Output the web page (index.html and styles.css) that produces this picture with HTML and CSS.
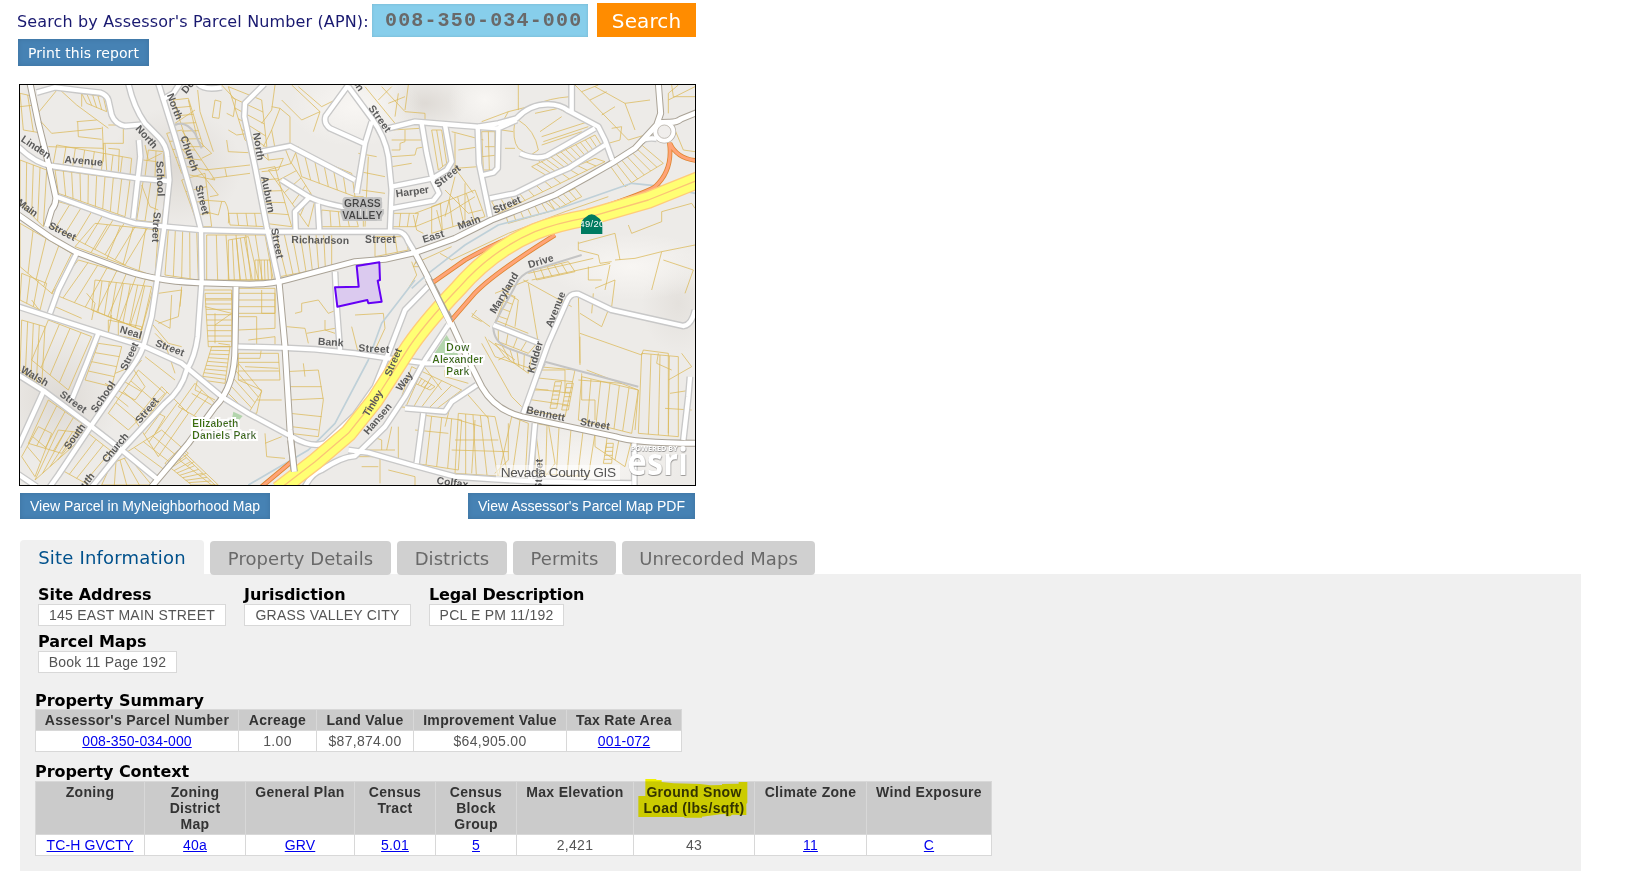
FILE: index.html
```html
<!DOCTYPE html>
<html lang="en">
<head>
<meta charset="utf-8">
<title>Parcel Report</title>
<link rel="stylesheet" href="styles.css">
</head>
<body>
<form class="search">
  <label class="search-label" for="apn">Search by Assessor's Parcel Number (APN):</label>
  <input class="search-input" id="apn" value="008-350-034-000">
  <button class="search-button" type="button">Search</button>
</form>
<button class="button print" type="button">Print this report</button>

<svg class="map" viewBox="15 15 2025 1200" aria-label="Parcel map">
  <defs>
    <radialGradient id="shade"><stop offset="0" stop-color="#dedad5"/><stop offset="1" stop-color="#dedad5" stop-opacity="0"/></radialGradient>
    <radialGradient id="light"><stop offset="0" stop-color="#f8f6f3"/><stop offset="1" stop-color="#f8f6f3" stop-opacity="0"/></radialGradient>
    <filter id="halo" x="-10%" y="-20%" width="120%" height="140%">
      <feMorphology in="SourceAlpha" operator="dilate" radius="5" result="wide"/>
      <feGaussianBlur in="wide" stdDeviation="1.5" result="soft"/>
      <feFlood flood-color="#fff"/><feComposite in2="soft" operator="in" result="glow"/>
      <feMerge><feMergeNode in="glow"/><feMergeNode in="SourceGraphic"/></feMerge>
    </filter>
    <filter id="placeHalo" x="-20%" y="-20%" width="140%" height="140%">
      <feMorphology in="SourceAlpha" operator="dilate" radius="6" result="wide"/>
      <feGaussianBlur in="wide" stdDeviation="2" result="soft"/>
      <feFlood flood-color="#c2c2c2"/><feComposite in2="soft" operator="in" result="glow"/>
      <feMerge><feMergeNode in="glow"/><feMergeNode in="SourceGraphic"/></feMerge>
    </filter>
    <g id="minor">
      <path d="M65 38L120 22L200 32L255 38Q275 45 280 60L290 105Q300 132 330 138L380 134"/>
      <path d="M340 10Q355 80 390 130L430 170Q455 195 457 230L463 300L448 440L425 610L410 710L385 800Q370 840 330 890L230 1035L150 1155L130 1185L105 1220"/>
      <path d="M430 10L480 170L540 380L558 450L560 600L548 770Q540 830 515 870Q500 930 450 970L320 1110L230 1222"/>
      <path d="M440 60L475 40L495 10M550 12Q570 32 620 22"/>
      <path d="M125 350L290 410L360 430L450 440L560 450L760 455L1150 455Q1170 458 1180 485L1200 518"/>
      <path d="M10 200Q60 250 110 258L370 295L460 303M372 180L376 230L368 300L355 415"/>
      <path d="M748 12L690 70L688 110L720 260L755 440L790 600M725 218L825 198L1020 300"/>
      <path d="M800 300L880 350Q920 372 1035 390M880 355L840 395L842 450M908 370L913 450"/>
      <path d="M1000 15L932 108Q925 130 945 145L1052 193M1000 20L1070 115Q1110 170 1120 230L1130 330L1125 450M1070 125L1050 190L1025 340"/>
      <path d="M185 520L130 630L105 700M960 575L965 680L975 810"/>
      <path d="M1120 145L1200 125L1320 135L1450 145L1505 120M1390 140L1450 130L1505 115Q1545 72 1600 73Q1635 73 1660 92L1750 140L1770 180L1792 240M1670 12L1670 95"/>
      <path d="M1515 220Q1560 240 1595 228L1740 145M1425 355L1500 340L1590 295L1660 265L1770 195M1388 140L1392 250L1425 410M1450 150L1448 265L1435 278L1405 285"/>
      <path d="M1220 130L1235 220L1253 300L1272 340L1255 362L1130 385M1290 135L1310 245L1295 270L1253 295L1130 320"/>
      <path d="M10 680L260 760L390 800L500 850L620 950L700 1000L830 1070Q890 1105 930 1090L1020 1005L1080 920L1120 820L1170 690L1240 618M250 760L215 850L170 960"/>
      <path d="M10 885L90 935L230 1040L320 1110L430 1200M85 935L10 1100M10 1183L65 1220"/>
      <path d="M670 800L800 803L900 808L1020 820L1120 835L1235 850L1290 850"/>
      <path d="M1300 735L1230 840L1170 950L1110 1040L1020 1128Q980 1130 920 1170Q890 1180 870 1220M1000 1110L1060 1118L1190 1155L1320 1190L1440 1198L1570 1205L1850 1210"/>
      <path d="M1170 985L1290 995L1310 965L1385 915M1225 1000L1205 1150M1560 1030L1545 1200M1525 1000L1600 790L1655 665Q1665 638 1690 642L1790 690L2005 738Q2030 735 2040 690M1435 735L1570 788M2025 890L2020 950L2005 1080M1858 1090L1858 1215"/>
      <path d="M1880 185Q1890 172 1925 176"/>
    </g>
    <g id="major">
      <path d="M10 405L110 475L180 515L300 560Q410 604 550 608L680 612Q760 615 820 598L1020 545L1110 538L1200 518L1320 475L1430 420L1520 385L1620 345L1720 290L1790 250L1860 205L1925 135L1937 100L1930 10"/>
      <path d="M45 10L70 130L100 250L122 350Q125 370 110 390L95 440"/>
      <path d="M1200 518L1300 710L1360 840L1400 920Q1440 990 1520 1010L1800 1070Q1860 1090 2045 1090"/>
      <path d="M792 605L810 800L825 1050L838 1180M663 620L660 800Q660 920 600 980L520 1090L410 1220M1925 128L1960 127Q1985 128 1998 117L2045 98"/>
    </g>
    <path id="highway" d="M2050 300L1900 360L1720 412Q1620 430 1560 455Q1430 510 1330 625Q1220 740 1170 820L1080 960L1000 1060L900 1145L790 1230"/>
    <clipPath id="shieldClip"><path d="M1698 405H1762V462H1698Z"/></clipPath>
  </defs>
  <rect class="land" x="15" y="15" width="2025" height="1200"/>
  <ellipse cx="480" cy="260" rx="200" ry="180" fill="url(#shade)"/>
  <ellipse cx="130" cy="960" rx="180" ry="200" fill="url(#shade)"/>
  <ellipse cx="1230" cy="70" rx="130" ry="80" fill="url(#shade)"/>
  <ellipse cx="1410" cy="60" rx="110" ry="90" fill="url(#light)"/>
  <ellipse cx="1700" cy="1160" rx="300" ry="120" fill="url(#light)"/>
  <ellipse cx="1990" cy="670" rx="110" ry="150" fill="url(#shade)" opacity=".6"/>
  <ellipse cx="1020" cy="80" rx="200" ry="120" fill="url(#light)"/>
  <ellipse cx="1850" cy="560" rx="260" ry="100" fill="url(#light)"/>
  <path class="park" d="M1295 765L1255 825L1330 825ZM655 995L683 1008L665 1028L648 1050L628 1045L650 1020Z"/>
  <path class="parcel-line" id="parcels" d="M15 80L60 75M60 110L130 25L185 75L280 145M185 125L245 120M200 35V80M188 125L190 170L260 178M262 140L265 210M100 200L265 205M280 135H325V190H265V245M270 190L275 270M280 205L313 208L310 275M60 105L110 160L260 145M390 195L400 240L440 220M385 240L425 245M380 315L405 380L430 390M600 60L618 65L612 115L592 112ZM520 60L548 180L590 220L560 235M548 30L555 95L595 215M500 205L610 345L585 350M480 130L540 90M620 15L662 60L655 110L635 100M640 150L665 165L700 160M635 180L640 215L700 218M570 270L705 255M590 295L705 280M630 265L635 290M560 360L630 365Q645 390 640 430M570 395L610 405L620 365M780 15L770 90L740 130M770 80L795 85L770 150L780 205M795 85L825 110L825 190L810 205L828 250L850 200M800 60L860 120L915 95M830 15L915 95L895 155M770 150L745 200M850 20L920 80L960 60M760 240L805 235L790 270L740 275M1020 350H1045V440M1030 220L1085 230M1035 275L1110 290M1040 330L1110 340M1060 230L1050 440M1130 150L1215 145M1130 180L1225 180M1130 230L1200 225L1205 205L1230 200M1130 260L1190 250M1170 150V185L1155 190V210H1130M1310 155L1405 180M1320 160V265L1375 340M1330 210L1395 200M1320 265L1390 260M1200 400L1280 370M1195 405L1205 450L1225 460M1200 440L1300 400L1380 350M1265 390L1280 450M1290 330L1360 400L1400 390M1320 290L1290 410M1350 310V420M1400 230L1450 225M1410 200H1450M1460 150L1495 155M1470 205H1500M1500 120Q1490 180 1510 205L1575 245M1510 120Q1560 150 1570 210L1540 230M1560 100L1630 85L1700 120M1575 155L1640 110M1580 170L1720 125M1585 185L1720 140M1580 195L1700 155M1510 15V90M1665 50Q1600 55 1560 75L1480 95L1400 125M1480 95L1460 130M1100 20L1170 95L1230 100L1230 120M1120 70L1170 50M1090 60L1130 20M1150 40L1140 110M1180 15L1170 90M1050 20L1140 130M1680 15L1840 180L1890 165M1700 35L1750 15M1725 60L1775 35M1760 105L1800 80M1830 70L1905 60M1740 20L1830 70L1860 150M1790 145L1820 140L1815 180L1780 190M1990 15L1960 40V100M1960 60L2040 20M1970 15L1975 50H2040M1980 150L2005 210L2040 215M1275 520L1310 540L1480 460L1650 395L1780 350M1200 550L1310 500M1690 490L1800 460L1815 540M1840 435L1850 460L1940 425V395L2030 370L2040 385M1690 485L1690 510L1750 525L1755 550L1790 545M1540 580L1735 535M1550 600L1785 550M1800 540L1860 535L1940 515L2040 495M1940 515L1910 630M1785 555L1770 630M1945 540L2035 570L2010 640M1720 560V600H1760M1210 530L1195 560L1230 560M1190 545L1205 585L1180 625M840 700L860 695V670L910 660L940 700L965 690M815 740L870 745L880 790M930 720V750L960 760M875 760L960 745M670 835H735L740 800M690 860L790 865M670 900L740 930L725 1000L710 1000M725 960L800 960M810 875L910 870L925 960L910 1070L825 1060M815 920L920 920M820 960L925 955M825 1000L920 1010M830 1040L910 1050M865 850L870 890M750 1060L755 1130L810 1135M750 1090L800 1070M550 890L540 930L600 960M530 940L590 975M430 640L500 630L490 710L430 730M470 645L465 745L420 720M410 730L460 790L500 800M500 620L495 680M565 630H650V660H570M570 680L650 700L600 735M600 700V790M610 790L645 795M670 625H780V745L670 750M670 710H725V795M740 630V700H780M700 780L780 770V800M420 760L450 790L480 880M280 720L380 740L375 780L280 760ZM290 705L280 760M310 720V765M50 660L80 700M215 640L240 670L230 720M120 680L200 715M270 910L360 960L390 920L350 860L300 880M290 940L340 980M320 900L380 935M380 840L330 900M390 830L480 900M410 990L450 1010L420 1060M1020 705L1105 700L1110 745L1080 810M1010 740L1030 820M1370 700L1425 740M1385 690L1370 710L1400 725M1420 780L1500 840M1440 640L1540 600M1525 600L1670 680M1440 720L1540 760M1475 640L1510 660L1500 740M1540 610L1570 790M1400 790L1490 950L1520 980M1410 770L1440 830L1560 870M1450 840L1470 830M1695 700L1760 740L1780 690M1695 760L1880 825L1885 810L1960 820V1060M1690 640L1695 855M1735 640L1730 700M1740 625L1800 600L1790 680M1695 770V850M1715 870L1870 930L1860 1050M1690 900L1820 910M1930 820L1925 850L1970 870M1960 900L2030 860L2000 820M1965 940L2030 930M1950 985L2030 990M1700 880V960H1740V1020M1580 850L1550 930H1600M1580 870L1650 870V940M1560 1040L1580 1190M1600 1030L1620 1150L1590 1190M1480 1030V1140L1440 1180M1380 1020L1370 1180M1320 1080L1450 1080M1310 1110L1480 1115M1330 1020L1400 1040M1130 1040L1115 1110M1150 1040V1140M1100 1110H1140M1060 1080Q1080 1070 1100 1080V1110H1050M1020 1130H1095V1210M1040 1160H1090M1200 1050L1300 1060M1120 1170L1200 1190V1215M1310 960L1290 1040M1355 940L1420 1015M1290 870V890L1360 910M1220 850L1280 930"/>
  <path class="creek" d="M1190 625L1240 580L1350 495L1450 435L1620 390L1850 310L1950 320L2040 340M1200 600L1100 730L1060 840L960 1030L880 1110L700 1215"/>
  <path class="lane" d="M480 135Q510 120 540 160L560 205M1700 525L1570 565Q1530 575 1510 600Q1490 640 1460 690L1435 740Q1435 785 1480 805L1590 845L1870 920M1535 955L1590 850"/>
  <use href="#minor" class="minor-case"/><use href="#major" class="major-case"/>
  <circle class="circle-case" cx="1948" cy="155" r="27"/>
  <use href="#minor" class="minor-fill"/><use href="#major" class="major-fill"/>
  <circle class="circle-fill" cx="1948" cy="155" r="27"/><circle class="circle-core" cx="1948" cy="155" r="20"/>
  <path class="ramp-case" d="M1963 188Q1975 270 1920 320Q1900 335 1740 390L1620 430Q1500 455 1350 540L1250 610M1965 190Q1985 235 2045 242M1620 465Q1420 590 1370 650L1305 725M830 1145L740 1220"/>
  <path class="ramp" d="M1963 188Q1975 270 1920 320Q1900 335 1740 390L1620 430Q1500 455 1350 540L1250 610M1965 190Q1985 235 2045 242M1620 465Q1420 590 1370 650L1305 725M830 1145L740 1220"/>
  <use href="#highway" class="highway-case"/><use href="#highway" class="highway-fill"/><use href="#highway" class="highway-mid"/>
  <path class="major-case" d="M1240 598L1305 725M827 1080L838 1175"/><path class="major-fill" d="M1235 588L1310 740M826 1070L838 1175"/>
  <path class="selected" d="M960 622L1031 620L1025 558L1093 547L1095 600L1088 602L1100 665L1060 670L1057 660L967 680Z"/>

  <g class="street-name">
    <text transform="translate(16 182) rotate(34)" textLength="100">Linden</text>
    <text transform="translate(148 248) rotate(5)" textLength="115">Avenue</text>
    <text transform="translate(360 147) rotate(48)" textLength="82">North</text>
    <text transform="translate(424 243) rotate(88)" textLength="106">School</text>
    <text transform="translate(416 395) rotate(93)" textLength="92">Street</text>
    <text transform="translate(455 45) rotate(69)" textLength="82">North</text>
    <text transform="translate(496 172) rotate(71)" textLength="110">Church</text>
    <text transform="translate(541 318) rotate(76)" textLength="91">Street</text>
    <text transform="translate(714 160) rotate(81)" textLength="84">North</text>
    <text transform="translate(738 290) rotate(79)" textLength="112">Auburn</text>
    <text transform="translate(768 447) rotate(79)" textLength="91">Street</text>
    <text transform="translate(4 372) rotate(36)" textLength="68">Main</text>
    <text transform="translate(98 443) rotate(27)" textLength="88">Street</text>
    <text transform="translate(829 489) rotate(1)" textLength="173">Richardson</text>
    <text transform="translate(513 43) rotate(-50)">Do</text>
    <text transform="translate(1010 5) rotate(55)">on</text>
    <text transform="translate(1059 85) rotate(54)" textLength="92">Street</text>
    <text transform="translate(1144 352) rotate(-8)" textLength="100">Harper</text>
    <text transform="translate(1268 324) rotate(-38)" textLength="90">Street</text>
    <text transform="translate(1226 489) rotate(-17)" textLength="66">East</text>
    <text transform="translate(1332 449) rotate(-20)" textLength="71">Main</text>
    <text transform="translate(1439 401) rotate(-23)" textLength="88">Street</text>
    <text transform="translate(1050 488)" textLength="92">Street</text>
    <text transform="translate(1543 565) rotate(-17)" textLength="78">Drive</text>
    <text transform="translate(1441 703) rotate(-59)" textLength="137">Maryland</text>
    <text transform="translate(313 757) rotate(17)" textLength="67">Neal</text>
    <text transform="translate(419 797) rotate(21)" textLength="90">Street</text>
    <text transform="translate(334 873) rotate(-65)" textLength="88">Street</text>
    <text transform="translate(243 1000) rotate(-56)" textLength="106">School</text>
    <text transform="translate(15 875) rotate(30)" textLength="90">Walsh</text>
    <text transform="translate(132 947) rotate(36)" textLength="91">Street</text>
    <text transform="translate(162 1110) rotate(-54)" textLength="86">South</text>
    <text transform="translate(375 1032) rotate(-50)" textLength="90">Street</text>
    <text transform="translate(275 1150) rotate(-50)" textLength="105">Church</text>
    <text transform="translate(185 1254) rotate(-50)" textLength="86">South</text>
    <text transform="translate(908 794) rotate(4)" textLength="77">Bank</text>
    <text transform="translate(1030 814) rotate(3)" textLength="93">Street</text>
    <text transform="translate(1127 891) rotate(-67)" textLength="88">Street</text>
    <text transform="translate(1158 935) rotate(-54)" textLength="62">Way</text>
    <text transform="translate(1060 1012) rotate(-59)" textLength="86">Tinloy</text>
    <text transform="translate(1060 1066) rotate(-50)" textLength="112">Hansen</text>
    <text transform="translate(1610 744) rotate(-68)" textLength="112">Avenue</text>
    <text transform="translate(1557 881) rotate(-74)" textLength="98">Kidder</text>
    <text transform="translate(1532 999) rotate(12)" textLength="118">Bennett</text>
    <text transform="translate(1694 1034) rotate(10)" textLength="90">Street</text>
    <text transform="translate(1264 1211) rotate(8)" textLength="95">Colfax</text>
    <text transform="translate(1580 1229) rotate(-88)" textLength="92">Street</text>
  </g>
  <g class="place-name" filter="url(#placeHalo)"><text x="1042" y="381">GRASS</text><text x="1042" y="417">VALLEY</text></g>
  <g class="park-name" filter="url(#halo)">
    <text x="1294" y="813" textLength="69">Dow</text><text x="1252" y="848" textLength="152">Alexander</text><text x="1294" y="884" textLength="69">Park</text>
  </g>
  <g class="park-name" filter="url(#halo)">
    <text x="532" y="1040" textLength="138">Elizabeth</text><text x="532" y="1076" textLength="192">Daniels Park</text>
  </g>
  <path class="shield" d="M1698 462V436Q1700 418 1712 412Q1730 394 1748 412Q1760 418 1762 436V462Z"/>
  <text class="shield-text" x="1731" y="440" clip-path="url(#shieldClip)">49/20</text>
  <rect class="credit-box" x="1443" y="1155" width="372" height="45"/>
  <text class="credit" x="1457" y="1191" textLength="346">Nevada County GIS</text>
  <g class="esri"><text class="esri-small" x="1847" y="1114" textLength="141" lengthAdjust="spacingAndGlyphs">POWERED BY</text><text class="esri-big" x="1837" y="1184" textLength="182" lengthAdjust="spacingAndGlyphs">esri</text></g>
</svg>

<div class="map-buttons">
  <button class="button map-button" type="button">View Parcel in MyNeighborhood Map</button>
  <button class="button map-button" type="button">View Assessor's Parcel Map PDF</button>
</div>

<nav class="tabs">
  <a class="tab tab-active">Site Information</a><a class="tab tab-details">Property Details</a><a class="tab tab-districts">Districts</a><a class="tab tab-permits">Permits</a><a class="tab tab-maps">Unrecorded Maps</a>
</nav>
<main class="panel">
  <div class="fields">
    <section class="field"><h3 class="heading">Site Address</h3><div class="value value-address">145 EAST MAIN STREET</div></section>
    <section class="field"><h3 class="heading">Jurisdiction</h3><div class="value value-city">GRASS VALLEY CITY</div></section>
    <section class="field"><h3 class="heading heading-legal">Legal Description</h3><div class="value value-legal">PCL E PM 11/192</div></section>
  </div>
  <div class="fields">
    <section class="field"><h3 class="heading">Parcel Maps</h3><div class="value value-book">Book 11 Page 192</div></section>
  </div>
  <h3 class="heading summary-heading">Property Summary</h3>
  <table class="grid summary">
    <colgroup><col class="s1"><col class="s2"><col class="s3"><col class="s4"><col class="s5"></colgroup>
    <tr><th>Assessor's Parcel Number</th><th>Acreage</th><th>Land Value</th><th>Improvement Value</th><th>Tax Rate Area</th></tr>
    <tr><td><a href="#">008-350-034-000</a></td><td>1.00</td><td>$87,874.00</td><td>$64,905.00</td><td><a href="#">001-072</a></td></tr>
  </table>
  <h3 class="heading context-heading">Property Context</h3>
  <table class="grid context">
    <colgroup><col class="c1"><col class="c2"><col class="c3"><col class="c4"><col class="c5"><col class="c6"><col class="c7"><col class="c8"><col class="c9"></colgroup>
    <tr><th>Zoning</th><th>Zoning<br>District<br>Map</th><th>General Plan</th><th>Census<br>Tract</th><th>Census<br>Block<br>Group</th><th>Max Elevation</th>
      <th class="marked">Ground Snow<br>Load (lbs/sqft)<svg class="marker" viewBox="401 297 345 120"><path d="M435 297H468V300H484V306L520 310L600 312L630 316L665 315V312L715 311V306H741V368L738 372V405L695 404L690 409H676V402L660 403L605 410V413H552V411H414V348H435Z"/></svg></th>
      <th>Climate Zone</th><th>Wind Exposure</th></tr>
    <tr><td><a href="#">TC-H GVCTY</a></td><td><a href="#">40a</a></td><td><a href="#">GRV</a></td><td><a href="#">5.01</a></td><td><a href="#">5</a></td><td>2,421</td><td>43</td><td><a href="#">11</a></td><td><a href="#">C</a></td></tr>
  </table>
</main>
<script src="parcels.js"></script>
</body>
</html>
```
FILE: styles.css
```css
* { box-sizing: border-box; }
body { margin: 0; width: 1651px; height: 873px; overflow: hidden; background: #fff; font-family: "DejaVu Sans", sans-serif; }
button, input { border: 0; margin: 0; padding: 0; font-family: inherit; border-radius: 0; }
.search { display: flex; align-items: flex-start; height: 39px; padding: 3px 0 0 17px; margin: 0; }
.search-label { width: 355px; padding-top: 9px; font-size: 16px; line-height: 20px; letter-spacing: .14px; color: #191970; white-space: nowrap; }
.search-input { width: 216px; height: 33px; margin-top: 1px; padding-left: 13px; background: #87ceeb; color: #696969; font: bold 20px "Liberation Mono", monospace; letter-spacing: 1.15px; box-shadow: inset 0 0 3px rgba(0,0,0,.12); }
.search-button { width: 99px; height: 34px; margin-left: 9px; padding-top: 1px; background: #ff8c00; color: #fff; font-size: 20px; letter-spacing: .1px; }
.button { background: #4682b4; color: #fff; box-shadow: inset 0 0 5px rgba(0,0,0,.12); white-space: nowrap; }
.print { display: block; width: 131px; height: 27px; margin-left: 18px; font-size: 14px; letter-spacing: .1px; }
.map { display: block; width: 677px; height: 402px; margin: 18px 0 0 19px; border: 1px solid #000; background: #edebe8; }
.map-buttons { display: flex; justify-content: space-between; width: 675px; height: 26px; margin: 7px 0 21px 20px; }
.map-button { padding: 0 10px; font: 14px "Liberation Sans", sans-serif; }
.tabs { display: flex; align-items: flex-start; gap: 6px; height: 34px; margin-left: 20px; }
.tab { height: 34px; margin-top: 1px; border-radius: 4px; background: #d0d0d0; color: #696969; font-size: 18px; line-height: 36px; letter-spacing: .07px; text-align: center; white-space: nowrap; position: relative; }
.tab-active { width: 184px; height: 35px; margin-top: 0; background: #f0f0f0; color: #00518c; border-radius: 4px 4px 0 0; letter-spacing: .2px; }
.tab-details { width: 181px; } .tab-districts { width: 110px; } .tab-permits { width: 103px; } .tab-maps { width: 193px; }
.panel { width: 1561px; height: 297px; margin-left: 20px; padding: 12px 0 0 15px; background: #f0f0f0; }
.fields { display: flex; gap: 18px; height: 47px; margin-left: 3px; }
.field { white-space: nowrap; }
.heading { margin: 0; height: 18px; font-size: 16px; line-height: 18px; letter-spacing: -.06px; font-weight: bold; color: #000; white-space: nowrap; }
.heading-legal { letter-spacing: -.15px; }
.value { height: 22px; border: 1px solid #d8d8d8; background: #fff; color: #555; font: 14px/20px "Liberation Sans", sans-serif; letter-spacing: .22px; text-align: center; white-space: nowrap; }
.value-address { width: 188px; } .value-city { width: 167px; } .value-legal { width: 135px; } .value-book { width: 139px; }
.summary-heading { margin-top: 11px; line-height: 19px; }
.context-heading { margin-top: 11px; }
.grid { table-layout: fixed; border-collapse: collapse; font: 14px/16px "Liberation Sans", sans-serif; color: #555; }
.grid th, .grid td { padding: 2px 0; height: 21px; border: 1px solid #d8d8d8; text-align: center; vertical-align: top; white-space: nowrap; letter-spacing: .3px; }
.grid th { background: #cbcbcb; color: #333; letter-spacing: .31px; }
.grid td { background: #fff; }
.grid a { color: #00e; letter-spacing: .14px; }
.summary { width: 647px; } .context { width: 957px; }
.context th { height: 53px; }
.s1 { width: 203px; } .s2 { width: 78px; } .s3 { width: 97px; } .s4 { width: 153px; } .s5 { width: 115px; }
.c1 { width: 109px; } .c2 { width: 101px; } .c3 { width: 109px; } .c4 { width: 81px; } .c5 { width: 81px; } .c6 { width: 117px; } .c7 { width: 121px; } .c8 { width: 112px; } .c9 { width: 125px; }
.marked { position: relative; }
.marker { position: absolute; left: 0; top: -3px; width: 115px; height: 40px; mix-blend-mode: multiply; fill: #ff0; }

.land { fill: #edebe8; }
.park { fill: #b3d5ac; }
.map path, .map use, .map circle { stroke-linejoin: round; }
.map .parcel-line { fill: none; stroke: #dcb95b; stroke-width: 2.7; stroke-opacity: .85; }
.creek { fill: none; stroke: #bfd0d8; stroke-width: 5; }
.lane { fill: none; stroke: #c4c4c4; stroke-width: 6; }
.minor-case { fill: none; stroke: #c8c8c8; stroke-width: 21; }
.minor-fill { fill: none; stroke: #fff; stroke-width: 13; }
.major-case { fill: none; stroke: #aaa397; stroke-width: 21; }
.major-fill { fill: none; stroke: #fff; stroke-width: 15; }
.ramp-case { fill: none; stroke: #df8530; stroke-width: 14; }
.ramp { fill: none; stroke: #ffa477; stroke-width: 9; }
.highway-case { fill: none; stroke: #ffcc79; stroke-width: 53; }
.highway-fill { fill: none; stroke: #ffff73; stroke-width: 45; }
.highway-mid { fill: none; stroke: #fbc476; stroke-width: 4; }
.circle-case { fill: #eee; stroke: #b5afa6; stroke-width: 17; }
.circle-fill { fill: #f0eeec; stroke: #fff; stroke-width: 12; }
.circle-core { fill: #f0eeec; stroke: #c4bfb8; stroke-width: 3; }
.selected { fill: #d8c6ef; fill-opacity: .9; stroke: #6500f5; stroke-width: 6; }
.street-name text { font: bold 31px "Liberation Sans", sans-serif; fill: #5a5a5a; }
.place-name text { font: bold 31px "Liberation Sans", sans-serif; fill: #444; text-anchor: middle; }
.park-name text { font: bold 31px "Liberation Sans", sans-serif; fill: #3d700d; }
.shield { fill: #007b60; }
.shield-text { font: 28px "Liberation Sans", sans-serif; fill: #fff; text-anchor: middle; letter-spacing: 1px; }
.credit-box { fill: #fff; fill-opacity: .55; }
.credit { font: 41px "Liberation Sans", sans-serif; fill: #555; }
.esri { fill: #fff; filter: drop-shadow(1px 2px 2px rgba(0,0,0,.5)); }
.esri-small { font: bold 20px "Open Sans", sans-serif; }
.esri-big { font: bold 112px "Open Sans", sans-serif; }
```
FILE: parcels.js
```js
// Rows of lots: front edge (x1,y1)-(x2,y2), back edge (x3,y3)-(x4,y4), lot count.
const rows = [
  [125,195,350,235,115,250,345,285,8],[120,270,345,300,130,340,330,410,9],[385,300,455,310,365,420,440,430,3],
  [15,240,95,270,15,370,85,440,4],[130,365,400,440,90,430,330,555,8],[180,500,420,590,240,430,430,450,5],
  [15,430,170,520,15,560,110,640,4],[190,540,420,605,110,640,380,750,8],[20,580,95,610,15,660,75,690,3],
  [240,600,410,620,230,690,380,750,8],[460,450,545,450,450,585,550,600,4],[575,465,750,465,575,600,775,600,6],
  [640,480,700,470,640,600,730,600,5],[720,540,775,540,720,600,780,600,6],[640,400,745,400,645,435,750,440,4],
  [760,465,950,460,795,590,950,560,8],[455,160,500,280,500,150,600,300,5],[500,300,550,440,570,280,590,440,4],
  [400,210,445,215,390,290,450,290,2],[640,20,690,180,740,60,760,240,5],[720,270,750,430,780,260,830,440,5],
  [760,270,880,440,830,250,900,360,5],[860,290,1020,350,840,210,1010,280,6],[920,390,1020,400,920,440,1030,440,4],
  [475,60,520,200,520,55,565,200,6],[200,40,265,50,215,70,275,95,4],[15,40,60,50,25,150,85,160,2],
  [1130,400,1210,400,1130,440,1200,440,3],[1250,380,1380,330,1250,460,1410,410,5],[1550,260,1740,165,1600,290,1765,205,13],
  [1430,365,1740,235,1450,400,1770,245,12],[1780,250,1880,195,1830,320,1945,250,6],[1590,365,1680,325,1620,390,1700,350,5],
  [1470,400,1600,360,1480,430,1620,390,6],[1400,155,1440,155,1405,270,1440,270,2],[1250,150,1280,150,1270,270,1295,250,2],
  [1080,470,1170,470,1080,530,1180,510,3],[1555,570,1660,545,1565,600,1680,575,5],[1475,640,1440,730,1500,650,1470,740,4],
  [570,640,580,800,650,640,650,800,10],[670,640,670,700,780,640,780,700,3],[590,800,560,900,645,800,630,910,9],
  [670,820,670,900,790,820,795,900,3],[670,850,640,940,740,935,700,1000,4],[440,920,520,1000,360,1020,430,1130,5],
  [440,1050,330,1120,520,1120,430,1190,4],[340,1050,450,940,280,1000,370,870,4],[130,1050,215,1060,60,1200,150,1120,4],
  [250,790,210,900,320,800,290,920,4],[100,720,230,770,50,840,160,930,4],[20,720,90,740,15,870,80,920,4],
  [100,960,200,1030,40,1090,140,1120,4],[220,1060,310,1130,140,1170,230,1220,4],
  [290,1150,340,1130,260,1215,410,1215,4],[490,1110,600,1215,450,1150,530,1215,9],[480,1130,590,1215,500,1110,610,1215,3],
  [540,910,600,970,490,980,560,1020,3],[1190,860,1340,930,1150,980,1260,990,5],[1220,1005,1340,1020,1200,1150,1330,1170,4],
  [1330,1000,1440,1010,1320,1180,1480,1190,5],[1570,860,1530,990,1680,870,1650,1010,4],[1560,1030,1740,1060,1560,1180,1720,1190,5],
  [1740,1060,1850,1080,1740,1100,1830,1160,3],[1700,890,1870,930,1690,1020,1850,1060,6],[1440,790,1550,830,1470,830,1540,880,5],
  [1450,745,1570,785,1450,785,1540,820,4],[1880,820,1990,830,1870,1060,1990,1070,4],[1490,1010,1540,1030,1450,1190,1530,1200,2],
  [1620,905,1605,985,1640,905,1625,985,6],[1655,910,1640,990,1675,910,1660,990,6],[1775,1090,1765,1150,1795,1090,1790,1150,5],
  [1210,890,1260,920,1200,910,1245,930,5],[70,1040,20,1130,110,1060,60,1190,3]
];
const mix = (a, b, t) => Math.round(a + (b - a) * t);
let lots = "";
for (const [a, b, c, d, e, f, g, h, n] of rows) {
  lots += `M${a} ${b}L${c} ${d}M${e} ${f}L${g} ${h}`;
  for (let i = 0; i <= n; i++) lots += `M${mix(a, c, i / n)} ${mix(b, d, i / n)}L${mix(e, g, i / n)} ${mix(f, h, i / n)}`;
}
const parcels = document.getElementById("parcels");
parcels.setAttribute("d", parcels.getAttribute("d") + lots);
```
